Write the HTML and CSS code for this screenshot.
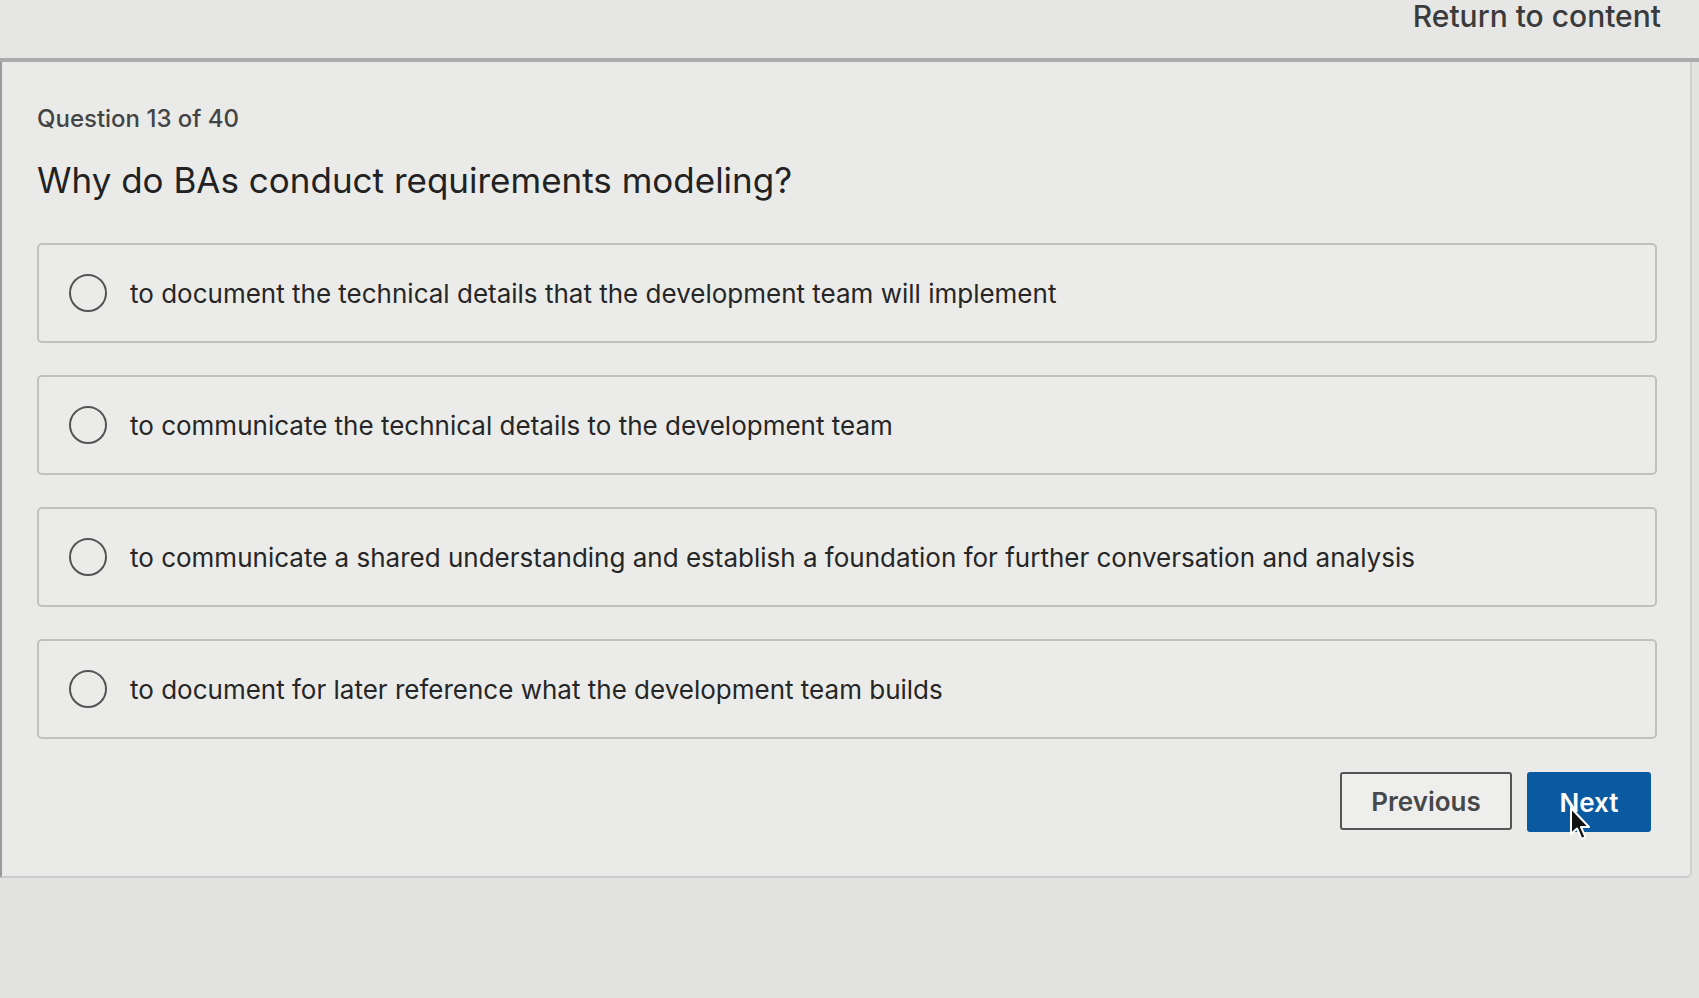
FILE: index.html
```html
<!DOCTYPE html>
<html lang="en">
<head>
<meta charset="utf-8">
<title>Question 13 of 40</title>
<link rel="stylesheet" href="styles.css">
</head>
<body>
<header class="topbar">
  <a class="return-link" href="#">Return to content</a>
</header>
<main class="card">
  <div class="q-count">Question 13 of 40</div>
  <h1 class="q-title">Why do BAs conduct requirements modeling?</h1>
  <div class="options">
    <label class="option"><span class="radio"></span><span class="opt-text">to document the technical details that the development team will implement</span></label>
    <label class="option"><span class="radio"></span><span class="opt-text">to communicate the technical details to the development team</span></label>
    <label class="option"><span class="radio"></span><span class="opt-text">to communicate a shared understanding and establish a foundation for further conversation and analysis</span></label>
    <label class="option"><span class="radio"></span><span class="opt-text">to document for later reference what the development team builds</span></label>
  </div>
  <div class="actions">
    <button class="btn btn-prev">Previous</button>
    <button class="btn btn-next">Next
      <svg class="cursor" width="24" height="36" viewBox="0 0 24 36"><path d="M2 2 L2 28 L8 22.5 L12.5 33 L16.5 31.2 L12 21 L20 21 Z" fill="#111" stroke="#fff" stroke-width="2" stroke-linejoin="round"/></svg>
    </button>
  </div>
</main>
</body>
</html>
```
FILE: styles.css
```css
* { box-sizing: border-box; }
html, body { margin: 0; padding: 0; }
body {
  background: #e2e3e1;
  font-family: Inter, "Liberation Sans", Arial, sans-serif;
  color: #2a2b2c;
  width: 1699px;
  height: 998px;
  overflow: hidden;
}
.topbar {
  height: 62px;
  display: flex;
  justify-content: flex-end;
  align-items: flex-start;
  padding-right: 38px;
  border-bottom: 4px solid #a9acab;
  background: #e6e7e5;
}
.return-link {
  font-size: 30px;
  line-height: 32px;
  color: #3a3b3c;
  text-decoration: none;
  font-weight: 500;
}
.card {
  width: 1692px;
  background: #eaebe9;
  border-left: 2px solid #9a9c9b;
  border-right: 2px solid #cfd0ce;
  border-bottom: 2px solid #cbcccb;
  border-radius: 0 0 6px 0;
  padding: 43px 33px 44px 35px;
}
.q-count {
  font-size: 24px;
  line-height: 28px;
  font-weight: 500;
  color: #444;
}
.q-title {
  margin: 25px 0 0 0;
  font-size: 35px;
  line-height: 44px;
  font-weight: 400;
  color: #222;
}
.options {
  margin-top: 41px;
  display: flex;
  flex-direction: column;
  gap: 32px;
}
.option {
  height: 100px;
  border: 2px solid #bfc1bf;
  border-radius: 5px;
  background: #ebecea;
  display: flex;
  align-items: center;
  padding-left: 30px;
  gap: 23px;
}
.radio {
  width: 38px;
  height: 38px;
  border: 2px solid #555;
  border-radius: 50%;
  flex: none;
  background: transparent;
}
.opt-text {
  font-size: 26px;
  color: #262626;
}
.actions {
  margin-top: 33px;
  display: flex;
  justify-content: flex-end;
  gap: 15px;
  padding-right: 6px;
}
.btn {
  font-family: Inter, "Liberation Sans", Arial, sans-serif;
  font-size: 26px;
  font-weight: 600;
  border-radius: 3px;
  cursor: pointer;
}
.btn-prev {
  width: 172px;
  height: 58px;
  background: #eeefed;
  border: 2px solid #555;
  color: #474849;
}
.btn-next {
  position: relative;
  width: 124px;
  height: 60px;
  background: #0a5aa2;
  border: none;
  color: #fff;
}
.cursor {
  position: absolute;
  left: 42px;
  top: 34px;
}
```
